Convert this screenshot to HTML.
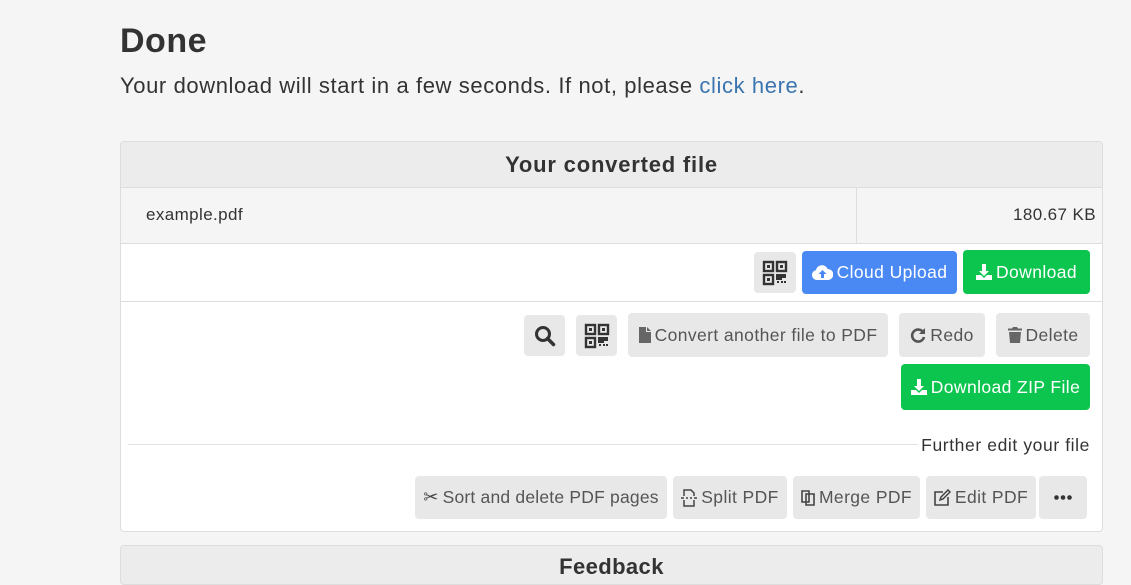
<!DOCTYPE html>
<html><head><style>
*{box-sizing:border-box;margin:0;padding:0}
body{width:1131px;height:569px;background:#f5f5f5;font-family:"Liberation Sans",sans-serif;color:#333;position:relative;overflow:hidden;letter-spacing:0.4px}
.a{position:absolute}
.btn{position:absolute;display:flex;align-items:center;justify-content:center;gap:4px;border-radius:4px;background:#e8e8e8;color:#555;font-size:17.5px;white-space:nowrap}
.g{background:#0cc54f;color:#fff}
.b{background:#4a89f3;color:#fff}
svg{display:block}
</style></head><body>
<div class="a" style="left:120px;top:22px;font-size:34px;font-weight:bold;color:#333;letter-spacing:0.5px">Done</div>
<div class="a" style="left:120px;top:73px;font-size:22px;color:#333;letter-spacing:0.6px">Your download will start in a few seconds. If not, please <span style="color:#3a75b0">click here</span>.</div>

<div class="a" style="left:120px;top:141px;width:983px;height:391px;border:1px solid #ddd;border-radius:4px;background:#fff;overflow:hidden">
 <div class="a" style="left:0;top:0;width:981px;height:46px;background:#ececec;border-bottom:1px solid #ddd;text-align:center;line-height:46px;font-size:22px;font-weight:bold;color:#333;letter-spacing:0.8px">Your converted file</div>
 <div class="a" style="left:0;top:46px;width:981px;height:56px;background:#f5f5f5;border-bottom:1px solid #ddd"></div>
 <div class="a" style="left:735px;top:46px;width:1px;height:56px;background:#ddd"></div>
 <div class="a" style="left:25px;top:63px;font-size:17px">example.pdf</div>
 <div class="a" style="right:6px;top:63px;font-size:17px">180.67 KB</div>
 <div class="a" style="left:0;top:159px;width:981px;height:1px;background:#ddd"></div>
 <div class="a" style="left:7px;top:302px;width:790px;height:1px;background:#e2e2e2"></div>
 <div class="a" style="right:12px;top:293px;font-size:17.5px;color:#333;letter-spacing:0.6px">Further edit your file</div>
</div>

<svg width="0" height="0" style="position:absolute"><defs>
<g id="qr"><rect x="0" y="0" width="9" height="9" fill="none" stroke="#333" stroke-width="2.4"/><rect x="3" y="3" width="3" height="3" fill="#333"/><rect x="13" y="0" width="9" height="9" fill="none" stroke="#333" stroke-width="2.4"/><rect x="16" y="3" width="3" height="3" fill="#333"/><rect x="0" y="13" width="9" height="9" fill="none" stroke="#333" stroke-width="2.4"/><rect x="3" y="16" width="3" height="3" fill="#333"/><rect x="12" y="12" width="6" height="6" fill="#333"/><rect x="18" y="12" width="4" height="4" fill="#333"/><rect x="13" y="19" width="2" height="2" fill="#333"/><rect x="17" y="19" width="2" height="2" fill="#333"/><rect x="20" y="19" width="2" height="2" fill="#333"/></g>
<g id="dl"><path d="M6 0h4v7h3l-5 5-5-5h3z" fill="#fff"/><path d="M0 11h5l3 3 3-3h5v5H0z" fill="#fff"/></g>
</defs></svg>

<div class="btn" style="left:754px;top:252px;width:42px;height:41px"><svg width="26" height="26" viewBox="-2 -2 26 26"><use href="#qr"/></svg></div>
<div class="btn b" style="left:802px;top:251px;width:155px;height:43px"><svg width="21" height="16" viewBox="0 0 21 16"><path d="M5 15a5 5 0 0 1-1-9.9A6 6 0 0 1 15.5 4 5.5 5.5 0 0 1 16 15z" fill="#fff"/><path d="M10.5 5l-4 4h2.5v4h3V9h2.5z" fill="#4a89f3"/></svg>Cloud Upload</div>
<div class="btn g" style="left:963px;top:250px;width:127px;height:44px"><svg width="16" height="16" viewBox="0 0 16 16"><use href="#dl"/></svg>Download</div>

<div class="btn" style="left:524px;top:315px;width:41px;height:41px"><svg width="22" height="22" viewBox="0 0 22 22"><circle cx="9" cy="9" r="6.5" fill="none" stroke="#333" stroke-width="3"/><path d="M13.5 13.5l6 6" stroke="#333" stroke-width="3.5" stroke-linecap="round"/></svg></div>
<div class="btn" style="left:576px;top:315px;width:41px;height:41px"><svg width="26" height="26" viewBox="-2 -2 26 26"><use href="#qr"/></svg></div>
<div class="btn" style="left:628px;top:313px;width:260px;height:44px"><svg width="12" height="16" viewBox="0 0 12 16"><path d="M0 0h7v5h5v11H0z M8 0l4 4H8z" fill="#666"/></svg>Convert another file to PDF</div>
<div class="btn" style="left:899px;top:313px;width:86px;height:44px"><svg width="16" height="16" viewBox="0 0 16 16"><path d="M13 5A6 6 0 1 0 14 10" fill="none" stroke="#555" stroke-width="2.6"/><path d="M15 1v6H9z" fill="#555"/></svg>Redo</div>
<div class="btn" style="left:996px;top:313px;width:94px;height:44px"><svg width="14" height="16" viewBox="0 0 14 16"><path d="M0 1.5h4l1-1.5h4l1 1.5h4v2H0z M1 5h12l-1 11H2z" fill="#666"/></svg>Delete</div>
<div class="btn g" style="left:901px;top:364px;width:189px;height:46px"><svg width="16" height="16" viewBox="0 0 16 16"><use href="#dl"/></svg>Download ZIP File</div>

<div class="btn" style="left:415px;top:476px;width:252px;height:43px;letter-spacing:0.2px"><span style="font-size:18px;color:#444">✂</span>Sort and delete PDF pages</div>
<div class="btn" style="left:673px;top:476px;width:114px;height:43px"><svg width="16" height="18" viewBox="0 0 16 18"><path d="M3 7V1h7l3 3v3M3 11v6h10v-6M0 9h3M5 9h2M9 9h2M13 9h3" fill="none" stroke="#444" stroke-width="1.5"/></svg>Split PDF</div>
<div class="btn" style="left:793px;top:476px;width:127px;height:43px"><svg width="14" height="17" viewBox="0 0 14 17"><path d="M1 2h7v11H1z M5 5h8v11H5z" fill="none" stroke="#444" stroke-width="1.6"/></svg>Merge PDF</div>
<div class="btn" style="left:926px;top:476px;width:110px;height:43px"><svg width="17" height="17" viewBox="0 0 17 17"><path d="M9 3H1v13h13V8" fill="none" stroke="#444" stroke-width="1.6"/><path d="M6 11l1-3 7-7 2 2-7 7z" fill="none" stroke="#444" stroke-width="1.5"/></svg>Edit PDF</div>
<div class="btn" style="left:1039px;top:476px;width:48px;height:43px"><svg width="18" height="5" viewBox="0 0 18 5"><circle cx="2.5" cy="2.5" r="2.3" fill="#333"/><circle cx="9" cy="2.5" r="2.3" fill="#333"/><circle cx="15.5" cy="2.5" r="2.3" fill="#333"/></svg></div>

<div class="a" style="left:120px;top:545px;width:983px;height:40px;border:1px solid #ddd;border-radius:4px;background:#ececec;text-align:center;padding-top:8px;font-size:22px;font-weight:bold;color:#333">Feedback</div>
</body></html>
